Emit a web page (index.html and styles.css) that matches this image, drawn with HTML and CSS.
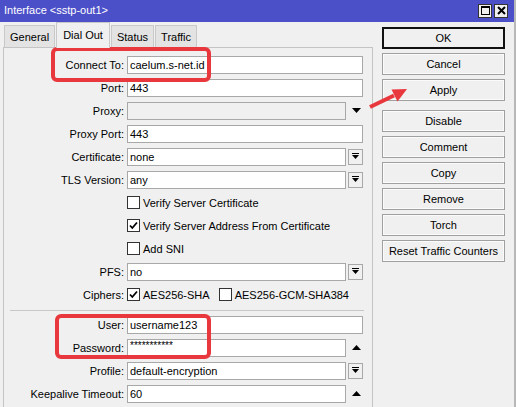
FILE: index.html
```html
<!DOCTYPE html>
<html>
<head>
<meta charset="utf-8">
<link rel="stylesheet" href="styles.css">
</head>
<body>
<div class="window">
  <div class="titlebar">
    <span class="title">Interface &lt;sstp-out1&gt;</span>
    <div class="tbtns">
      <span class="tbtn"><svg width="9" height="9" viewBox="0 0 9 9"><rect x="0.5" y="0.5" width="8" height="8" fill="none" stroke="#000" stroke-width="1"/><rect x="0" y="0" width="9" height="2" fill="#000"/></svg></span>
      <span class="tbtn"><svg width="9" height="9" viewBox="0 0 9 9"><path d="M1 1 L8 8 M8 1 L1 8" stroke="#000" stroke-width="2"/></svg></span>
    </div>
  </div>
  <div class="main">
    <div class="left">
      <div class="tabs">
        <div class="tab">General</div>
        <div class="tab active">Dial Out</div>
        <div class="tab">Status</div>
        <div class="tab">Traffic</div>
      </div>
      <div class="panel">
        <div class="row"><label>Connect To:</label><div class="input full">caelum.s-net.id</div></div>
        <div class="row"><label>Port:</label><div class="input full">443</div></div>
        <div class="row"><label>Proxy:</label><div class="input part disabled"></div><span class="arrow"><svg width="9" height="5" viewBox="0 0 9 5"><polygon points="0,0 9,0 4.5,5" fill="#000"/></svg></span></div>
        <div class="row"><label>Proxy Port:</label><div class="input full">443</div></div>
        <div class="row"><label>Certificate:</label><div class="input part">none</div><span class="dd"><svg width="7" height="7" viewBox="0 0 7 7"><rect x="0" y="0" width="7" height="1" fill="#000"/><polygon points="0,2 7,2 3.5,6" fill="#000"/></svg></span></div>
        <div class="row"><label>TLS Version:</label><div class="input part">any</div><span class="dd"><svg width="7" height="7" viewBox="0 0 7 7"><rect x="0" y="0" width="7" height="1" fill="#000"/><polygon points="0,2 7,2 3.5,6" fill="#000"/></svg></span></div>
        <div class="row"><label></label><span class="cb"></span><span class="cbl">Verify Server Certificate</span></div>
        <div class="row"><label></label><span class="cb"><svg width="11" height="11" viewBox="0 0 11 11"><path d="M2 5.5 L4.3 8 L9 2.5" fill="none" stroke="#000" stroke-width="1.8"/></svg></span><span class="cbl">Verify Server Address From Certificate</span></div>
        <div class="row"><label></label><span class="cb"></span><span class="cbl">Add SNI</span></div>
        <div class="row"><label>PFS:</label><div class="input part">no</div><span class="dd"><svg width="7" height="7" viewBox="0 0 7 7"><rect x="0" y="0" width="7" height="1" fill="#000"/><polygon points="0,2 7,2 3.5,6" fill="#000"/></svg></span></div>
        <div class="row"><label>Ciphers:</label><span class="cb"><svg width="11" height="11" viewBox="0 0 11 11"><path d="M2 5.5 L4.3 8 L9 2.5" fill="none" stroke="#000" stroke-width="1.8"/></svg></span><span class="cbl c1">AES256-SHA</span><span class="cb"></span><span class="cbl">AES256-GCM-SHA384</span></div>
        <div class="sep"></div>
        <div class="row"><label>User:</label><div class="input full">username123</div></div>
        <div class="row"><label>Password:</label><div class="input part pw">***********</div><span class="arrow"><svg width="9" height="5" viewBox="0 0 9 5"><polygon points="0,5 9,5 4.5,0" fill="#000"/></svg></span></div>
        <div class="row"><label>Profile:</label><div class="input part">default-encryption</div><span class="dd"><svg width="7" height="7" viewBox="0 0 7 7"><rect x="0" y="0" width="7" height="1" fill="#000"/><polygon points="0,2 7,2 3.5,6" fill="#000"/></svg></span></div>
        <div class="row"><label>Keepalive Timeout:</label><div class="input part">60</div><span class="arrow"><svg width="9" height="5" viewBox="0 0 9 5"><polygon points="0,5 9,5 4.5,0" fill="#000"/></svg></span></div>
      </div>
    </div>
    <div class="right">
      <div class="btn ok">OK</div>
      <div class="btn">Cancel</div>
      <div class="btn">Apply</div>
      <div class="btn gap">Disable</div>
      <div class="btn">Comment</div>
      <div class="btn">Copy</div>
      <div class="btn">Remove</div>
      <div class="btn">Torch</div>
      <div class="btn">Reset Traffic Counters</div>
    </div>
  </div>
</div>
<div class="hl hl1"></div>
<div class="hl hl2"></div>
<svg class="redarrow" width="516" height="407" viewBox="0 0 516 407">
  <line x1="370" y1="107" x2="394" y2="95.5" stroke="#e8383d" stroke-width="4"/>
  <polygon points="407,89 391.5,89.5 397.5,101.5" fill="#e8383d"/>
</svg>
</body>
</html>
```
FILE: styles.css
```css
* { box-sizing: border-box; }
html, body { margin: 0; padding: 0; }
body {
  width: 516px;
  height: 407px;
  overflow: hidden;
  background: #f0f0f0;
  font-family: "Liberation Sans", Arial, sans-serif;
  font-size: 11px;
  color: #000;
  position: relative;
}
.window {
  width: 516px;
  height: 407px;
  display: flex;
  flex-direction: column;
  border-right: 2px solid #b8b8b8;
}
.titlebar {
  height: 22px;
  background: #4c50c8;
  color: #fff;
  display: flex;
  align-items: center;
  justify-content: space-between;
  padding: 0 6px 0 4px;
  font-size: 11px;
  flex: none;
}
.title { margin-top: -2px; }
.tbtns { display: flex; gap: 2px; margin-top: -1px; }
.tbtn {
  width: 14px;
  height: 14px;
  background: #f0f0f0;
  border: 1px solid #333;
  display: flex;
  align-items: center;
  justify-content: center;
}
.main { display: flex; flex: 1; }
.left { width: 373px; display: flex; flex-direction: column; }
.tabs {
  height: 25px;
  display: flex;
  align-items: flex-end;
  padding-left: 4px;
  gap: 1px;
  position: relative;
  z-index: 1;
}
.tab {
  height: 22px;
  padding: 0 5px;
  background: #e3e3e3;
  border: 1px solid #c9c9c9;
  border-bottom: none;
  line-height: 22px;
  font-size: 11px;
}
.tab.active {
  height: 26px;
  margin-bottom: -1px;
  background: #f0f0f0;
  line-height: 24px;
  padding: 0 6px;
}
.panel {
  flex: 1;
  margin-left: 3px;
  border: 1px solid #c4c4c4;
  border-bottom: none;
  padding-top: 5px;
}
.row {
  height: 23px;
  display: flex;
  align-items: center;
}
.row label {
  width: 120px;
  text-align: right;
  margin-right: 3px;
  white-space: nowrap;
  font-size: 11px;
}
.input {
  height: 18px;
  border: 1px solid #a8a8a8;
  background: #fff;
  padding: 0 2px;
  line-height: 16px;
  font-size: 11px;
  white-space: nowrap;
}
.input.full { width: 236px; }
.input.part { width: 219px; }
.input.disabled { background: #f0f0f0; }
.input.pw { font-size: 10px; line-height: 12px; }
.dd {
  width: 15px;
  height: 16px;
  margin-left: 2px;
  border: 1px solid #a8a8a8;
  background: #f0f0f0;
  display: flex;
  align-items: center;
  justify-content: center;
}
.arrow {
  width: 17px;
  display: flex;
  justify-content: center;
  padding-left: 4px;
}
.cb {
  width: 13px;
  height: 13px;
  border: 1px solid #333;
  background: #fff;
  display: flex;
  align-items: center;
  justify-content: center;
  margin-right: 3px;
}
.cbl { font-size: 11px; white-space: nowrap; }
.cbl.c1 { margin-right: 9px; }
.sep {
  height: 1px;
  margin: 4px 8px 2px 6px;
  background: #c8c8c8;
}
.right {
  margin-left: 9px;
  width: 123px;
  padding-top: 5px;
  display: flex;
  flex-direction: column;
  gap: 4px;
}
.btn {
  height: 22px;
  border: 1px solid #a0a0a0;
  background: #f0f0f0;
  box-shadow: inset 0 0 0 1px #fbfbfb;
  text-align: center;
  line-height: 20px;
  font-size: 11px;
}
.btn.ok { border: 2px solid #111; line-height: 18px; box-shadow: none; }
.btn.gap { margin-top: 5px; }
.hl {
  position: absolute;
  border: 4px solid #e8383d;
  border-radius: 6px;
}
.hl1 { left: 51px; top: 47px; width: 160px; height: 35px; }
.hl2 { left: 55px; top: 314px; width: 156px; height: 45px; }
.redarrow { position: absolute; left: 0; top: 0; pointer-events: none; }
```
